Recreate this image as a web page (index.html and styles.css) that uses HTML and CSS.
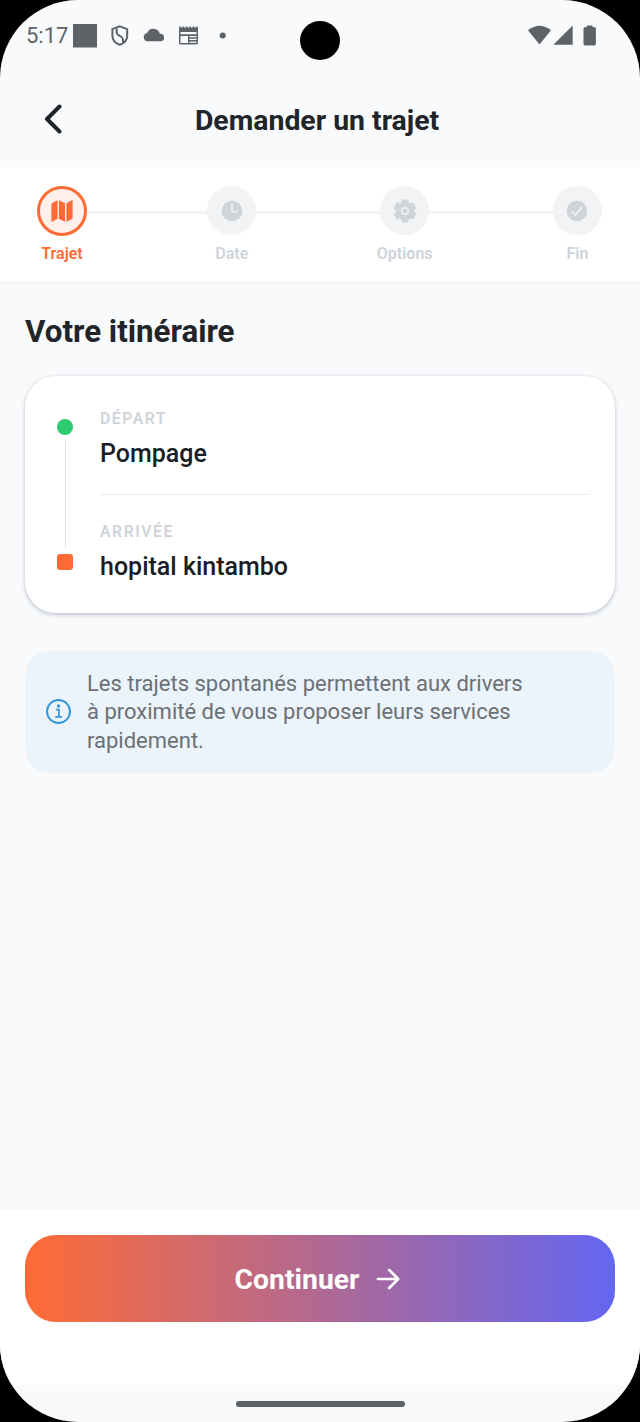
FILE: index.html
```html
<!DOCTYPE html>
<html lang="fr">
<head>
<meta charset="utf-8">
<title>Demander un trajet</title>
<link rel="stylesheet" href="styles.css">
</head>
<body>
<div class="screen">
  <div class="status">
    <span class="time">5:17</span>
    <svg class="status-left" width="160" height="28" viewBox="70 22 160 28" fill="#5f6368">
      <path d="M73 24h24v23.500h-24z"/>
      <path d="M119.800 26.400l7.400 2.700v6.400c0 4.500-3 7.800-7.400 9.300-4.400-1.500-7.400-4.800-7.400-9.300v-6.400z" fill="none" stroke="#5f6368" stroke-width="2"/>
      <path d="M117 28.500c-1.500 5 .5 6 3 7.500s4 3 2.800 6.500" fill="none" stroke="#5f6368" stroke-width="2"/>
      <path d="M147.400 41.300a4.200 4.200 0 0 1-.2-8.300 6.600 6.600 0 0 1 12.600.8 3.800 3.800 0 0 1 1.200 7.500z"/>
      <path fill-rule="evenodd" d="M179 27.500h19v15.200a1.800 1.800 0 0 1-1.800 1.800h-15.400a1.800 1.800 0 0 1-1.800-1.800zM180.500 32v2.300h16v-2.300zM180.500 36v7h7.500V36zM189.500 36v1.200h7V36zM189.500 38.800v1.200h7v-1.200zM189.500 41.600v1.200h7v-1.200z"/>
      <path d="M180 28.500v-2M183.400 28.500v-2M186.800 28.500v-2M190.200 28.500v-2M193.600 28.500v-2M197 28.500v-2" stroke="#5f6368" stroke-width="1.500"/>
      <circle cx="222.700" cy="35.500" r="3"/>
    </svg>
    <span class="camera"></span>
    <svg class="status-right" width="72" height="24" viewBox="526 24 72 24" fill="#5f6368">
      <path d="M528 30.300q11.500-9.200 23 0L539.500 44.600z"/>
      <path d="M553.300 44.800L572.700 25.500v19.300z"/>
      <path d="M587 27v-1.500h5.500V27h1.800a1.600 1.600 0 0 1 1.600 1.600v15.200a1.600 1.600 0 0 1-1.600 1.600h-9.200a1.600 1.600 0 0 1-1.600-1.600V28.600a1.600 1.600 0 0 1 1.600-1.600z"/>
    </svg>
  </div>

  <header class="header">
    <svg class="back" width="20" height="32" viewBox="0 0 20 32"><path d="M17.500 3.500L5 16l12.500 12.500" fill="none" stroke="#212529" stroke-width="4" stroke-linecap="round" stroke-linejoin="round"/></svg>
    <h1 class="title">Demander un trajet</h1>
  </header>

  <nav class="stepper">
    <div class="step active">
      <span class="bubble"><svg width="26" height="26" viewBox="0 0 26 26" fill="#ff6b35"><path d="M8.500 2.200v18.600l-5.300 3a.5.500 0 0 1-.8-.4V6.200c0-.6.200-.9.700-1.200zM9.900 2.200l6.100 3v18.600l-6.100-3zM17.400 5.200l5.400-3a.5.500 0 0 1 .8.400v17.200c0 .6-.2.900-.7 1.200l-5.500 3z"/></svg></span>
      <span class="label">Trajet</span>
    </div>
    <span class="connector"></span>
    <div class="step">
      <span class="bubble"><svg width="22" height="22" viewBox="0 0 22 22"><circle cx="11" cy="11" r="10.300" fill="#ced4da"/><path d="M11 4.300v7.500h5" fill="none" stroke="#f1f3f5" stroke-width="1.500" stroke-linecap="round"/></svg></span>
      <span class="label">Date</span>
    </div>
    <span class="connector"></span>
    <div class="step options">
      <span class="bubble"><svg width="24" height="24" viewBox="-12 -12 24 24"><g fill="#ced4da"><circle r="9.300"/><g id="tooth"><rect x="-3.700" y="-11.400" width="7.400" height="22.800" rx="1.500"/></g><use href="#tooth" transform="rotate(60)"/><use href="#tooth" transform="rotate(120)"/></g><circle r="3.300" fill="#ced4da" stroke="#f1f3f5" stroke-width="1.600"/></svg></span>
      <span class="label">Options</span>
    </div>
    <span class="connector"></span>
    <div class="step">
      <span class="bubble"><svg width="22" height="22" viewBox="0 0 22 22"><circle cx="11" cy="11" r="10.300" fill="#ced4da"/><path d="M6.200 11.800l3.200 3.400 6.300-7.900" fill="none" stroke="#f1f3f5" stroke-width="1.600" stroke-linecap="round" stroke-linejoin="round"/></svg></span>
      <span class="label">Fin</span>
    </div>
  </nav>

  <main class="content">
    <h2 class="heading">Votre itinéraire</h2>
    <section class="card">
      <div class="rail"><span class="dot"></span><span class="track"></span><span class="square"></span></div>
      <div class="places">
        <div class="place"><span class="kind">DÉPART</span><span class="name">Pompage</span></div>
        <div class="place arrival"><span class="kind">ARRIVÉE</span><span class="name">hopital kintambo</span></div>
      </div>
    </section>
    <section class="info">
      <svg width="28" height="28" viewBox="0 0 28 28" fill="none" stroke="#3498db" stroke-width="2"><circle cx="14.500" cy="13.500" r="11.500"/><path d="M12 11.700h2.900v6.900M11.300 18.900h6.800" stroke-width="1.800"/><circle cx="14.500" cy="8" r="1.700" fill="#3498db" stroke="none"/></svg>
      <p class="info-text">Les trajets spontanés permettent aux drivers<br>à proximité de vous proposer leurs services<br>rapidement.</p>
    </section>
  </main>

  <footer class="footer">
    <button class="continue"><span>Continuer</span><svg width="26" height="26" viewBox="0 0 26 26" fill="none" stroke="#fff" stroke-width="2.700" stroke-linecap="round" stroke-linejoin="round"><path d="M3 13h20M14.200 4l9 9-9 9"/></svg></button>
  </footer>
  <div class="home"><span class="handle"></span></div>
</div>
</body>
</html>
```

FILE: styles.css
```css
* { box-sizing: border-box; }
body { margin: 0; background: #000; font-family: Roboto, "Liberation Sans", sans-serif; color: #212529; }
svg { display: block; flex: none; }
.screen { display: flex; flex-direction: column; width: 640px; height: 1422px; overflow: hidden; background: #f8fafc; border-radius: 78px; }

.status { position: relative; display: flex; align-items: center; height: 72px; padding: 0 42px 0 26px; }
.time { width: 44px; font-size: 22px; line-height: 26px; margin-top: -1px; color: #5f6368; }
.status-right { margin-left: auto; }
.camera { position: absolute; left: 300px; top: 21px; width: 40px; height: 39px; border-radius: 50%; background: #000; }

.header { display: flex; align-items: center; height: 95px; padding: 0 43px 0 42px; }
.back { margin-top: -1px; }
.title { flex: 1; margin: 2px 25px 0 0; text-align: center; font-size: 28.400px; line-height: 36px; font-weight: 700; }

.stepper { display: flex; align-items: flex-start; height: 117px; padding: 19px 38px 0 37px; background: #fff; border-bottom: 2px solid #f1f3f5; }
.step { display: flex; flex-direction: column; align-items: center; width: 49px; color: #ced4da; }
.step.active { width: 50px; color: #ff6b35; }
.step.options { width: 56px; }
.bubble { z-index: 1; display: flex; align-items: center; justify-content: center; width: 49px; height: 49px; border-radius: 50%; background: #f1f3f5; }
.active .bubble { width: 50px; height: 50px; margin-bottom: -1px; border: 3px solid #ff6b35; background: #fff0eb; }
.label { margin-top: 9px; font-size: 16px; line-height: 20px; font-weight: 600; }
.connector { flex: 1; height: 3px; margin: 25px -12px 0; background: #f1f3f5; }

.content { flex: 1; padding: 28px 25px 0; }
.heading { margin: 0 0 24px; font-size: 31.300px; line-height: 40px; font-weight: 700; }
.card { display: flex; height: 237px; padding: 32px 25px 0 32px; background: #fff; border-radius: 31px; box-shadow: 0 2px 4px rgba(80, 100, 115, .3), 0 0 3px rgba(80, 100, 115, .13); }
.rail { display: flex; flex-direction: column; align-items: center; width: 16px; margin: 11px 27px 0 0; }
.dot { width: 16px; height: 16px; border-radius: 50%; background: #2ecc71; }
.track { width: 1px; height: 107px; margin: 6px 0; background: #dfe3e8; }
.square { width: 16px; height: 16px; border-radius: 3px; background: #ff6b35; }
.places { flex: 1; }
.place { display: flex; flex-direction: column; height: 87px; border-bottom: 1px solid #e9ebee; }
.arrival { height: 110px; padding-top: 26px; border: 0; }
.kind { font-size: 15.700px; line-height: 22px; font-weight: 600; letter-spacing: 1.600px; color: #ced4da; }
.name { margin-top: 8px; font-size: 25px; line-height: 32px; font-weight: 500; color: #1a1d26; }
.info { display: flex; align-items: center; gap: 15px; height: 122px; margin-top: 38px; padding-left: 19px; background: #ebf3fb; border-radius: 25px; }
.info-text { margin: 0; padding-top: 1px; font-size: 22px; line-height: 28.500px; color: #6c7075; }

.footer { height: 176px; padding: 25px; background: #fff; border-top: 1px solid #f1f3f5; }
.continue { display: flex; align-items: center; justify-content: center; gap: 16px; width: 100%; height: 87px; padding: 0 4px 0 0; border: 0; border-radius: 31px; background: linear-gradient(90deg, #ff6b35, #6366f1); color: #fff; font: 700 28.300px/36px Roboto, sans-serif; }
.continue span { padding-top: 3px; }
.home { display: flex; justify-content: center; height: 37px; padding-top: 16px; }
.handle { width: 169px; height: 6px; border-radius: 3px; background: #5f6368; }
```
